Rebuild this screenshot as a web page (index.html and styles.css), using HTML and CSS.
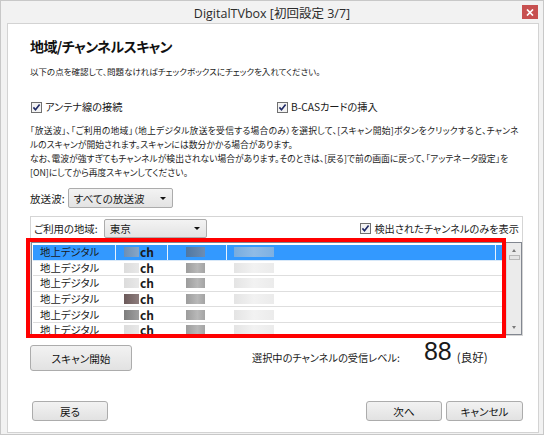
FILE: index.html
```html
<!DOCTYPE html>
<html lang="ja">
<head>
<meta charset="utf-8">
<title>DigitalTVbox</title>
<link rel="stylesheet" href="styles.css">
</head>
<body>
<div class="window">
  <div class="titlebar">
    <span></span>
    <span class="title">DigitalTVbox [初回設定 3/7]</span>
    <span class="close"><svg width="8" height="7" viewBox="0 0 8 7"><path d="M1 0.5 L7 6.5 M7 0.5 L1 6.5" stroke="#fff" stroke-width="1.7" fill="none"/></svg></span>
  </div>
  <div class="panel">
    <h1 class="heading">地域/チャンネルスキャン</h1>
    <p class="lead">以下の点を確認して、問題なければチェックボックスにチェックを入れてください。</p>
    <div class="checks">
      <div class="check c1"><svg class="cb" width="11" height="11" viewBox="0 0 11 11"><rect x="0.5" y="0.5" width="10" height="10" fill="#f3f3f3" stroke="#707070"/><path d="M2.4 5.4 L4.5 7.8 L8.6 2.6" fill="none" stroke="#1f2a66" stroke-width="1.6"/></svg><span>アンテナ線の接続</span></div>
      <div class="check c2"><svg class="cb" width="11" height="11" viewBox="0 0 11 11"><rect x="0.5" y="0.5" width="10" height="10" fill="#f3f3f3" stroke="#707070"/><path d="M2.4 5.4 L4.5 7.8 L8.6 2.6" fill="none" stroke="#1f2a66" stroke-width="1.6"/></svg><span>B-CASカードの挿入</span></div>
    </div>
    <p class="desc"><span class="wide">「放送波」、「ご利用の地域」（地上デジタル放送を受信する場合のみ）を選択して、[スキャン開始]ボタンをクリックすると、チャンネ</span><br>ルのスキャンが開始されます。スキャンには数分かかる場合があります。<br>なお、電波が強すぎてもチャンネルが検出されない場合があります。そのときは、[戻る]で前の画面に戻って、「アッテネータ設定」を<br>[ON]にしてから再度スキャンしてください。</p>
    <div class="wave-row">
      <span class="lbl">放送波:</span>
      <div class="combo combo-wave"><span>すべての放送波</span><i class="arrow"></i></div>
    </div>
    <div class="group">
      <div class="group-top">
        <span class="lbl">ご利用の地域:</span>
        <div class="combo combo-area"><span>東京</span><i class="arrow"></i></div>
        <div class="check c3"><svg class="cb" width="11" height="11" viewBox="0 0 11 11"><rect x="0.5" y="0.5" width="10" height="10" fill="#f3f3f3" stroke="#707070"/><path d="M2.4 5.4 L4.5 7.8 L8.6 2.6" fill="none" stroke="#1f2a66" stroke-width="1.6"/></svg><span>検出されたチャンネルのみを表示</span></div>
      </div>
      <div class="list">
        <div class="rows">
          <div class="row sel"><div class="cell col1">地上デジタル</div><div class="cell col2"><i class="bl b2 s"></i><b>ch</b></div><div class="cell col3"><i class="bl b3 s"></i></div><div class="cell col4"><i class="bl b4 s"></i></div><div class="cell col5"></div></div>
          <div class="row"><div class="cell col1">地上デジタル</div><div class="cell col2"><i class="bl b2 l"></i><b>ch</b></div><div class="cell col3"><i class="bl b3"></i></div><div class="cell col4"><i class="bl b4"></i></div><div class="cell col5"></div></div>
          <div class="row"><div class="cell col1">地上デジタル</div><div class="cell col2"><i class="bl b2 l"></i><b>ch</b></div><div class="cell col3"><i class="bl b3"></i></div><div class="cell col4"><i class="bl b4"></i></div><div class="cell col5"></div></div>
          <div class="row"><div class="cell col1">地上デジタル</div><div class="cell col2"><i class="bl b2 d"></i><b>ch</b></div><div class="cell col3"><i class="bl b3"></i></div><div class="cell col4"><i class="bl b4"></i></div><div class="cell col5"></div></div>
          <div class="row"><div class="cell col1">地上デジタル</div><div class="cell col2"><i class="bl b2 m"></i><b>ch</b></div><div class="cell col3"><i class="bl b3"></i></div><div class="cell col4"><i class="bl b4"></i></div><div class="cell col5"></div></div>
          <div class="row"><div class="cell col1">地上デジタル</div><div class="cell col2"><i class="bl b2 l"></i><b>ch</b></div><div class="cell col3"><i class="bl b3"></i></div><div class="cell col4"><i class="bl b4"></i></div><div class="cell col5"></div></div>
        </div>
        <div class="scrollbar">
          <div class="sb-btn"><i class="tri up"></i></div>
          <div class="sb-thumb"></div>
          <div class="sb-track"></div>
          <div class="sb-btn"><i class="tri down"></i></div>
        </div>
      </div>
    </div>
    <div class="scan-row">
      <div class="btn btn-scan">スキャン開始</div>
      <div class="level"><span class="level-label">選択中のチャンネルの受信レベル:</span><span class="level-num">88</span><span class="level-q">(良好)</span></div>
    </div>
    <div class="footer">
      <div class="btn btn-foot">戻る</div>
      <div class="footer-right">
        <div class="btn btn-foot">次へ</div>
        <div class="btn btn-foot btn-cancel">キャンセル</div>
      </div>
    </div>
  </div>
  <div class="highlight"></div>
</div>
</body>
</html>
```
FILE: styles.css
```css
* { box-sizing: border-box; }
html, body { margin: 0; padding: 0; }
body {
  width: 544px;
  height: 435px;
  overflow: hidden;
  background: #f0f0f0;
  font-family: "Noto Sans CJK JP", "Noto Sans", sans-serif;
  font-feature-settings: "palt";
  color: #1a1a1a;
}
.window {
  position: relative;
  width: 544px;
  height: 435px;
  border: 1px solid #c8c8c8;
  background: #f2f2f2;
}
.titlebar {
  height: 22px;
  display: grid;
  grid-template-columns: 1fr auto 1fr;
  align-items: start;
}
.title {
  font-family: "Open Sans", "Noto Sans CJK JP", sans-serif;
  font-size: 12.5px;
  line-height: 22px;
  padding-top: 2px;
  color: #2b2b2b;
  white-space: nowrap;
}
.close {
  justify-self: end;
  margin: 4px 5px 0 0;
  width: 16px;
  height: 14px;
  background: #c75050;
  display: flex;
  align-items: center;
  justify-content: center;
}
.close svg { display: block; }
.panel {
  margin-left: 6px;
  width: 532px;
  height: 410px;
  background: #fff;
  border: 1px solid #d3d3d3;
  padding: 0 15px 0 22px;
}
.heading {
  margin: 12px 0 0;
  font-size: 14px;
  font-weight: 700;
  line-height: 20px;
  letter-spacing: -0.6px;
  color: #111;
}
.lead {
  margin: 8px 0 0;
  font-size: 8.5px;
  line-height: 14px;
  white-space: nowrap;
}
.checks {
  margin-top: 22px;
  display: flex;
  padding-left: 1px;
  font-size: 10.2px;
  line-height: 14px;
}
.check {
  display: flex;
  align-items: center;
  gap: 3px;
  white-space: nowrap;
}
.cb { display: block; flex: none; }
.c1 { width: 246px; }
.desc {
  margin: 10px 0 0;
  font-size: 8.8px;
  line-height: 14px;
  white-space: nowrap;
}
.desc .wide { letter-spacing: 0.25px; }
.wave-row {
  margin-top: 8px;
  height: 20px;
  display: flex;
  align-items: center;
  font-size: 10.6px;
}
.lbl { white-space: nowrap; }
.combo {
  display: flex;
  align-items: center;
  justify-content: space-between;
  border: 1px solid #acacac;
  border-radius: 2px;
  background: linear-gradient(#f3f3f3, #e3e3e3);
  padding: 0 6px 0 5px;
  font-size: 10.6px;
}
.arrow {
  width: 0;
  height: 0;
  border-left: 3px solid transparent;
  border-right: 3px solid transparent;
  border-top: 3px solid #111;
}
.combo-wave {
  margin-left: 3px;
  width: 105px;
  height: 20px;
}
.group {
  margin-top: 8px;
  width: 493px;
  height: 120px;
  border: 1px solid #d5d5d5;
  display: flex;
  flex-direction: column;
}
.group-top {
  margin-top: 2px;
  height: 19px;
  display: flex;
  align-items: center;
  padding: 0 3px;
  font-size: 10.4px;
}
.combo-area {
  margin-left: 6px;
  width: 103px;
  height: 19px;
}
.c3 { margin-left: auto; font-size: 10.2px; }
.list {
  margin-top: 4px;
  height: 93px;
  border: 1px solid #828790;
  display: flex;
  overflow: hidden;
}
.rows {
  flex: 1;
  padding: 2px 0 0 1px;
  overflow: hidden;
}
.row {
  height: 15.6px;
  display: flex;
  border-bottom: 1px solid #dedede;
  font-size: 10.4px;
  line-height: 14px;
}
.row.sel { background: #3399ff; border-bottom-color: #d8e8f8; }
.cell {
  display: flex;
  align-items: center;
  white-space: nowrap;
}
.row.sel .cell { border-right: 1px solid #e8f2fd; }
.col1 { width: 83px; padding-left: 7px; }
.col2 { width: 52px; padding-left: 8px; }
.col3 { width: 59px; padding-left: 18px; }
.col4 { width: 269px; padding-left: 7px; }
.col5 { flex: 1; }
.row.sel .col5 { border-right: none; }
.col2 b { font-weight: 700; font-size: 12px; line-height: 14px; margin-left: 1px; }
.bl { display: block; height: 10px; }
.b2 { width: 15px; }
.b3 { width: 19px; background: linear-gradient(90deg, #9c9c9c, #b8b8b8 60%, #a4a4a4); }
.b4 { width: 40px; background: linear-gradient(90deg, #e4e4e4, #f2f2f2 50%, #ebebeb); }
.b2.l { background: linear-gradient(90deg, #dcdcdc, #e8e8e8); }
.b2.d { background: linear-gradient(90deg, #6c5a5a, #8e7e7e); }
.b2.m { background: linear-gradient(90deg, #7d7d7d, #a0a0a0); }
.b2.s { background: linear-gradient(90deg, #6d8fb5, #88a6c6); }
.b3.s { background: linear-gradient(90deg, #4f77a3, #6d8db3); }
.b4.s { background: linear-gradient(90deg, #77acdf, #8fbbe6 50%, #7db0e2); }
.scrollbar {
  width: 15px;
  flex: none;
  background: #ebebeb;
  border-left: 1px solid #d8d8d8;
  display: flex;
  flex-direction: column;
  align-items: center;
}
.sb-btn {
  height: 14px;
  width: 100%;
  display: flex;
  align-items: center;
  justify-content: center;
}
.sb-thumb {
  width: 11px;
  height: 5px;
  border: 1px solid #b8b8b8;
  background: #e4e4e4;
  margin-top: -2px;
}
.sb-track { flex: 1; }
.tri {
  width: 0;
  height: 0;
  border-left: 2.5px solid transparent;
  border-right: 2.5px solid transparent;
}
.tri.up { border-bottom: 3px solid #7a7a7a; }
.tri.down { border-top: 3px solid #7a7a7a; }
.btn {
  display: flex;
  align-items: center;
  justify-content: center;
  border: 1px solid #acacac;
  border-radius: 3px;
  background: linear-gradient(#f2f2f2, #e2e2e2);
  font-size: 10.6px;
  white-space: nowrap;
  color: #111;
}
.scan-row {
  margin-top: 9px;
  display: flex;
  align-items: flex-start;
  height: 26px;
}
.btn-scan { width: 102px; height: 26px; }
.level {
  margin-left: 120px;
  align-self: flex-end;
  white-space: nowrap;
  line-height: 26px;
}
.level-label { font-size: 10.2px; }
.level-num {
  font-family: "Liberation Sans", sans-serif;
  font-size: 25px;
  margin-left: 24px;
  vertical-align: 2px;
}
.level-q { font-size: 11.5px; margin-left: 5px; }
.footer {
  margin-top: 30px;
  display: flex;
  justify-content: space-between;
  padding-left: 2px;
}
.footer-right { display: flex; gap: 4px; }
.btn-foot { width: 76px; height: 20px; }
.btn-cancel { width: 77px; }
.highlight {
  position: absolute;
  left: 25px;
  top: 237px;
  width: 480px;
  height: 100px;
  border: 4px solid #ff0000;
  pointer-events: none;
}
```
